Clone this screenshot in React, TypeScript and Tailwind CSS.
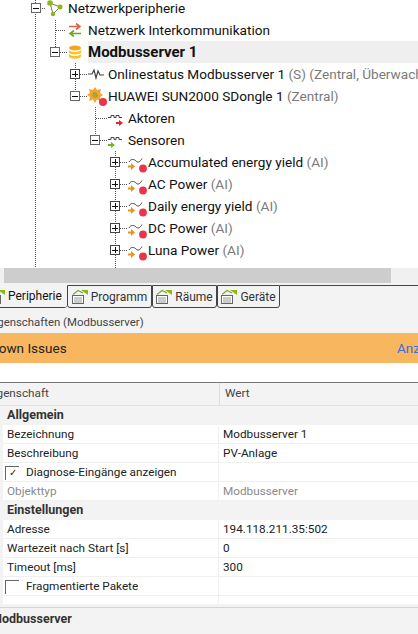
import type { ReactNode } from 'react'

function NetIcon() {
  return (
    <svg width="18" height="18" viewBox="0 0 18 18" className="shrink-0">
      <path d="M3 4 L13 8 L6 15 Z" fill="none" stroke="#777" strokeWidth="1" />
      <circle cx="3" cy="4" r="2.8" fill="#8cb811" />
      <circle cx="13" cy="8" r="2.5" fill="#8cb811" />
      <circle cx="6" cy="15" r="2.2" fill="#8cb811" />
    </svg>
  )
}

function ArrowsIcon() {
  return (
    <svg width="14" height="14" viewBox="0 0 14 14" className="shrink-0">
      <path d="M1 3.5 H11 M8 0.5 L12 3.5 L8 6.5" fill="none" stroke="#d9654f" strokeWidth="1.6" />
      <path d="M13 10.5 H3 M6 7.5 L2 10.5 L6 13.5" fill="none" stroke="#6fa51c" strokeWidth="1.6" />
    </svg>
  )
}

function DbIcon() {
  return (
    <svg width="14" height="15" viewBox="0 0 14 15" className="shrink-0">
      <ellipse cx="7" cy="3" rx="6" ry="2.6" fill="#f5a71c" />
      <path d="M1 5 C2 7.5 12 7.5 13 5 V7.5 C12 10 2 10 1 7.5 Z" fill="#fbc21f" />
      <path d="M1 9 C2 11.5 12 11.5 13 9 V11.5 C12 14.5 2 14.5 1 11.5 Z" fill="#fbc21f" />
    </svg>
  )
}

function PulseIcon() {
  return (
    <svg width="16" height="12" viewBox="0 0 16 12" className="shrink-0">
      <path d="M0 6 H4 L6 2 L8 10 L10 3 L12 7 H16" fill="none" stroke="#444" strokeWidth="1.2" />
    </svg>
  )
}

function FlowerIcon() {
  return (
    <svg width="18" height="18" viewBox="0 0 18 18" className="-ml-px shrink-0 overflow-visible">
      <path d="M8 0 L10 3 L14 2 L13 6 L16 8 L13 10 L14 14 L10 12.5 L8 16 L6 12.5 L2 14 L3 10 L0 8 L3 6 L2 2 L6 3 Z" fill="#f4a52d" />
      <circle cx="8" cy="8" r="2.6" fill="#b3a23a" />
      <circle cx="7" cy="6" r="0.8" fill="#6aa53a" />
      <circle cx="10" cy="9" r="0.8" fill="#6aa53a" />
      <circle cx="16" cy="15" r="4" fill="#e9344c" />
    </svg>
  )
}

function WaveIcon({ color, dir }: { color: string; dir: string }) {
  return (
    <svg width="15" height="16" viewBox="0 0 15 16" className="shrink-0">
      <path d="M0 7.5 H3 V5.5 H6 V7.5 H8 V5.5 H11 V7.5 H14" fill="none" stroke="#444" strokeWidth="1" />
      {dir === 'out' ? (
        <path d="M8 12 H11 V10 L15 13 L11 16 V14 H8 Z" fill={color} />
      ) : (
        <path d="M0 12 H3 V10 L7 13 L3 16 V14 H0 Z" fill={color} />
      )}
    </svg>
  )
}

function SensorIcon() {
  return (
    <svg width="17" height="17" viewBox="0 0 17 17" className="shrink-0 overflow-visible">
      <path d="M1 8 C3 4.5 6 5 8 7 C10 9 12 8 14 4.5" fill="none" stroke="#444" strokeWidth="1" />
      <path d="M0 11.5 H3 V9 L7 12.5 L3 16 V13.5 H0 Z" fill="#e0961f" />
      <circle cx="15" cy="14.5" r="3.9" fill="#e9344c" />
    </svg>
  )
}

function Box({ open }: { open?: boolean }) {
  return (
    <span className={`relative flex w-[10px] h-[10px] shrink-0 items-center justify-center border bg-white ${open ? 'border-[#666]' : 'border-[#444]'}`}>
      <span className="absolute w-[6px] h-px bg-[#111]" />
      {!open && <span className="absolute h-[6px] w-px bg-[#111]" />}
    </span>
  )
}

function Row({ pad, gap, box, icon, children, selected }: { pad: string; gap: string; box?: 'open' | 'closed'; icon: ReactNode; children: ReactNode; selected?: boolean }) {
  return (
    <div className={`flex h-[22px] items-center ${pad}`}>
      {box && <Box open={box === 'open'} />}
      <span className={`flex w-[20px] shrink-0 items-center ${gap}`}>{icon}</span>
      <span className={`flex h-[22px] flex-1 items-center whitespace-nowrap ${selected ? 'bg-[#efefef] text-[15px] font-bold' : ''}`}>{children}</span>
    </div>
  )
}

const Muted = ({ children }: { children: ReactNode }) => <span className="text-[#7a7a7a]">{children}</span>

function TreeLines() {
  return (
    <svg width="418" height="268" className="absolute left-0 top-0">
      <path
        d="M35.5 0 V268 M40 8.5 H46 M55.5 20 V47 M56 30.5 H66 M60 52.5 H68 M75.5 63 V91 M80 74.5 H87 M80 96.5 H87 M95.5 107 V135 M96 118.5 H107 M100 140.5 H107 M115.5 151 V268 M120 162.5 H127 M120 184.5 H127 M120 206.5 H127 M120 228.5 H127 M120 250.5 H127"
        fill="none"
        stroke="#555"
        strokeWidth="1"
        strokeDasharray="1 1"
      />
    </svg>
  )
}

function TabIcon() {
  return (
    <svg width="16" height="15" viewBox="0 0 16 15" className="shrink-0">
      <path d="M1 5.5 L6 1.5 L11 4" fill="none" stroke="#7fa83a" strokeWidth="1.2" />
      <path d="M9 1 H16 V6 Z" fill="#8cb811" />
      <rect x="0.5" y="6.5" width="11" height="8" fill="#fff" stroke="#666" />
      <path d="M2 9 H10 M2 11 H10 M2 13 H10" stroke="#999" strokeWidth="1" />
    </svg>
  )
}

function Tab({ width, label, active }: { width: string; label: string; active?: boolean }) {
  return (
    <div className={`flex h-[23px] items-center gap-[3px] rounded-b-[3px] text-[12px] ${width} ${active ? '-ml-[11px] justify-start border-b border-[#444] text-[#111]' : 'justify-center border border-[#444] bg-[#f3f3f3] text-[#333]'}`}>
      <TabIcon />
      <span>{label}</span>
    </div>
  )
}

function PropRow({ label, value, dim, check }: { label: string; value?: string; dim?: boolean; check?: 'on' | 'off' }) {
  return (
    <div className={`ml-[3px] grid h-[19px] grid-cols-[216px_1fr] border-b border-[#f0f0f0] bg-white pt-px ${dim ? 'text-[#8a8a8a]' : 'text-[#222]'}`}>
      {check ? (
        <div className="flex items-center border-r border-[#f0f0f0] pl-[2px]">
          <span className="flex h-[14px] w-[14px] shrink-0 items-center justify-center border-l border-t border-[#666] text-[10px] leading-none">{check === 'on' ? '✓' : ''}</span>
          <span className="ml-[7px]">{label}</span>
        </div>
      ) : (
        <div className="flex items-center border-r border-[#f0f0f0] pl-[4px]">{label}</div>
      )}
      <div className="flex items-center pl-[4px]">{value}</div>
    </div>
  )
}

const Group = ({ label }: { label: string }) => (
  <div className="flex h-[19px] items-center pl-[7px] text-[12.5px] font-bold text-[#333]">{label}</div>
)

export default function App() {
  return (
    <div className="flex h-[634px] w-[418px] flex-col overflow-hidden bg-[#f3f3f3] font-['Roboto',sans-serif] text-[11.75px] text-[#222]">
      {/* Tree */}
      <div className="relative h-[268px] shrink-0 overflow-hidden bg-white text-[13.6px] text-[#111]">
        <TreeLines />
        <div className="relative -mt-[3px]">
          <Row pad="pl-[31px]" gap="ml-[6px] w-[21px]" box="open" icon={<NetIcon />}>Netzwerkperipherie</Row>
          <Row pad="pl-[68px]" gap="" icon={<ArrowsIcon />}>Netzwerk Interkommunikation</Row>
          <Row pad="pl-[50px]" gap="ml-[8px]" box="open" icon={<DbIcon />} selected>Modbusserver 1</Row>
          <Row pad="pl-[70px]" gap="ml-[8px]" box="closed" icon={<PulseIcon />}>
            <span>Onlinestatus Modbusserver 1 <Muted>(S) (Zentral, Überwachung)</Muted></span>
          </Row>
          <Row pad="pl-[70px]" gap="ml-[8px]" box="open" icon={<FlowerIcon />}>
            <span>HUAWEI SUN2000 SDongle 1 <Muted>(Zentral)</Muted></span>
          </Row>
          <Row pad="pl-[108px]" gap="" icon={<WaveIcon color="#e0252b" dir="out" />}>Aktoren</Row>
          <Row pad="pl-[90px]" gap="ml-[8px]" box="open" icon={<WaveIcon color="#79b01e" dir="in" />}>Sensoren</Row>
          {['Accumulated energy yield', 'AC Power', 'Daily energy yield', 'DC Power', 'Luna Power'].map((name) => (
            <Row key={name} pad="pl-[110px]" gap="ml-[8px]" box="closed" icon={<SensorIcon />}>
              <span>{name} <Muted>(AI)</Muted></span>
            </Row>
          ))}
        </div>
      </div>

      {/* Horizontal scrollbar */}
      <div className="flex h-[15px] shrink-0 bg-[#f0f0f0] pl-[4px] pr-[27px]">
        <div className="flex-1 bg-[#cdcdcd]" />
      </div>

      {/* Tabs */}
      <div className="mt-[2px] flex h-[23px] shrink-0 items-start">
        <Tab width="w-[78px]" label="Peripherie" active />
        <Tab width="w-[85px]" label="Programm" />
        <Tab width="w-[65px]" label="Räume" />
        <Tab width="w-[63px]" label="Geräte" />
        <div className="h-px flex-1 bg-[#444]" />
      </div>

      {/* Properties title */}
      <div className="-ml-[12px] flex h-[25px] shrink-0 items-center pt-[5px] text-[11.4px] text-[#444]">Eigenschaften (Modbusserver)</div>

      {/* Banner */}
      <div className="-ml-[17px] flex h-[30px] shrink-0 items-center justify-between bg-[#f8b65e] pt-px text-[13.5px] text-[#222]">
        <span>Known Issues</span>
        <span className="w-[21px] overflow-hidden text-[#3d6fd8]">Anzeigen</span>
      </div>

      <div className="h-[19px] shrink-0 bg-white" />

      {/* Table */}
      <div className="flex h-[24px] shrink-0 border-t border-b border-t-[#777] border-b-[#e0e0e0] text-[#444]">
        <div className="-ml-[13px] flex w-[233px] items-center border-r border-[#ddd]">Eigenschaft</div>
        <div className="flex flex-1 items-center pl-[5px]">Wert</div>
      </div>
      <Group label="Allgemein" />
      <PropRow label="Bezeichnung" value="Modbusserver 1" />
      <PropRow label="Beschreibung" value="PV-Anlage" />
      <PropRow label="Diagnose-Eingänge anzeigen" check="on" />
      <PropRow label="Objekttyp" value="Modbusserver" dim />
      <Group label="Einstellungen" />
      <PropRow label="Adresse" value="194.118.211.35:502" />
      <PropRow label="Wartezeit nach Start [s]" value="0" />
      <PropRow label="Timeout [ms]" value="300" />
      <PropRow label="Fragmentierte Pakete" check="off" />
      <div className="ml-[3px] grid h-[8px] shrink-0 grid-cols-[216px_1fr] bg-white">
        <div className="border-r border-[#f0f0f0]" />
      </div>

      {/* Footer */}
      <div className="-ml-[9px] mt-[3px] flex h-[27px] shrink-0 items-start border-t border-[#d4d4d4] pt-[2px] text-[12.5px] font-bold text-[#333]">Modbusserver</div>
    </div>
  )
}
